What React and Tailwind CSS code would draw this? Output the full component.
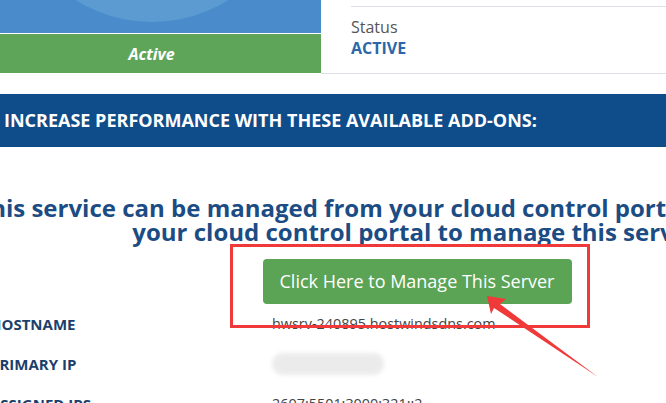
import React from 'react';

const rows = [
  { label: 'HOSTNAME', value: 'hwsrv-240895.hostwindsdns.com' },
  { label: 'PRIMARY IP', value: null },
  { label: 'ASSIGNED IPS', value: '2607:5501:3000:321::2' },
];

export default function App() {
  return (
    <div className="relative w-[666px] h-[403px] overflow-hidden bg-white font-['Open_Sans',sans-serif]">
      {/* top status area */}
      <div className="flex ml-[-18px]">
        <div className="w-[339px] shrink-0">
          <div className="h-[33px] bg-[#4a8bcb] overflow-hidden">
            <svg width="339" height="33" viewBox="0 0 339 33">
              <circle cx="170" cy="-122" r="144" fill="#5c9bd1" />
            </svg>
          </div>
          <div className="h-[1px] bg-white" />
          <div className="h-[39px] bg-[#5ea55a] flex items-center justify-center">
            <span className="text-white font-bold italic text-[16px]">Active</span>
          </div>
        </div>
        <div className="flex-1 border-b border-[#dde1e6] h-[74px]">
          <div className="ml-[30px] mt-[6px] border-t border-[#dde1e6] pt-[10px]">
            <div className="text-[16px] leading-[21px] text-[#555]">Status</div>
            <div className="text-[16px] leading-[21px] font-bold text-[#2a68aa]">ACTIVE</div>
          </div>
        </div>
      </div>

      {/* add-ons band */}
      <div className="mt-[20px] h-[53px] bg-[#0f4c8a] flex items-center pl-[4px]">
        <span className="text-white font-bold text-[18px] whitespace-nowrap">
          INCREASE PERFORMANCE WITH THESE AVAILABLE ADD-ONS:
        </span>
      </div>

      {/* cloud portal notice */}
      <div className="w-[1000px] ml-[-81px] mt-[49px] text-center text-[24px] leading-[24px] font-bold text-[#1c4c84] whitespace-nowrap">
        This service can be managed from your cloud control portal. Please access
        <br />
        your cloud control portal to manage this server.
      </div>

      <div className="w-[1000px] ml-[-83px] mt-[15px] flex justify-center">
        <button className="w-[309px] h-[45px] rounded-[4px] bg-[#5ba355] text-white text-[18px]">
          Click Here to Manage This Server
        </button>
      </div>

      {/* details */}
      <div className="ml-[-10px] flex flex-col">
        {rows.map((r) => (
          <div key={r.label} className="flex items-center h-[40px]">
            <div className="w-[282px] shrink-0 text-[15px] font-bold text-[#1b3f6b]">{r.label}</div>
            {r.value ? (
              <div className="text-[14.4px] text-[#444]">{r.value}</div>
            ) : (
              <div className="w-[112px] h-[22px] rounded-full bg-[#ebebeb] blur-[2px]" />
            )}
          </div>
        ))}
      </div>

      {/* annotation overlay */}
      <div className="absolute left-[230px] top-[244px] w-[360px] h-[84px] border-[3px] border-[#f03a3a]" />
      <svg className="absolute left-0 top-0" width="666" height="403" viewBox="0 0 666 403">
        <polygon
          points="487,296 506,299 500,304 598,377 494,308 491,314"
          fill="#f03a3a"
        />
      </svg>
    </div>
  );
}
